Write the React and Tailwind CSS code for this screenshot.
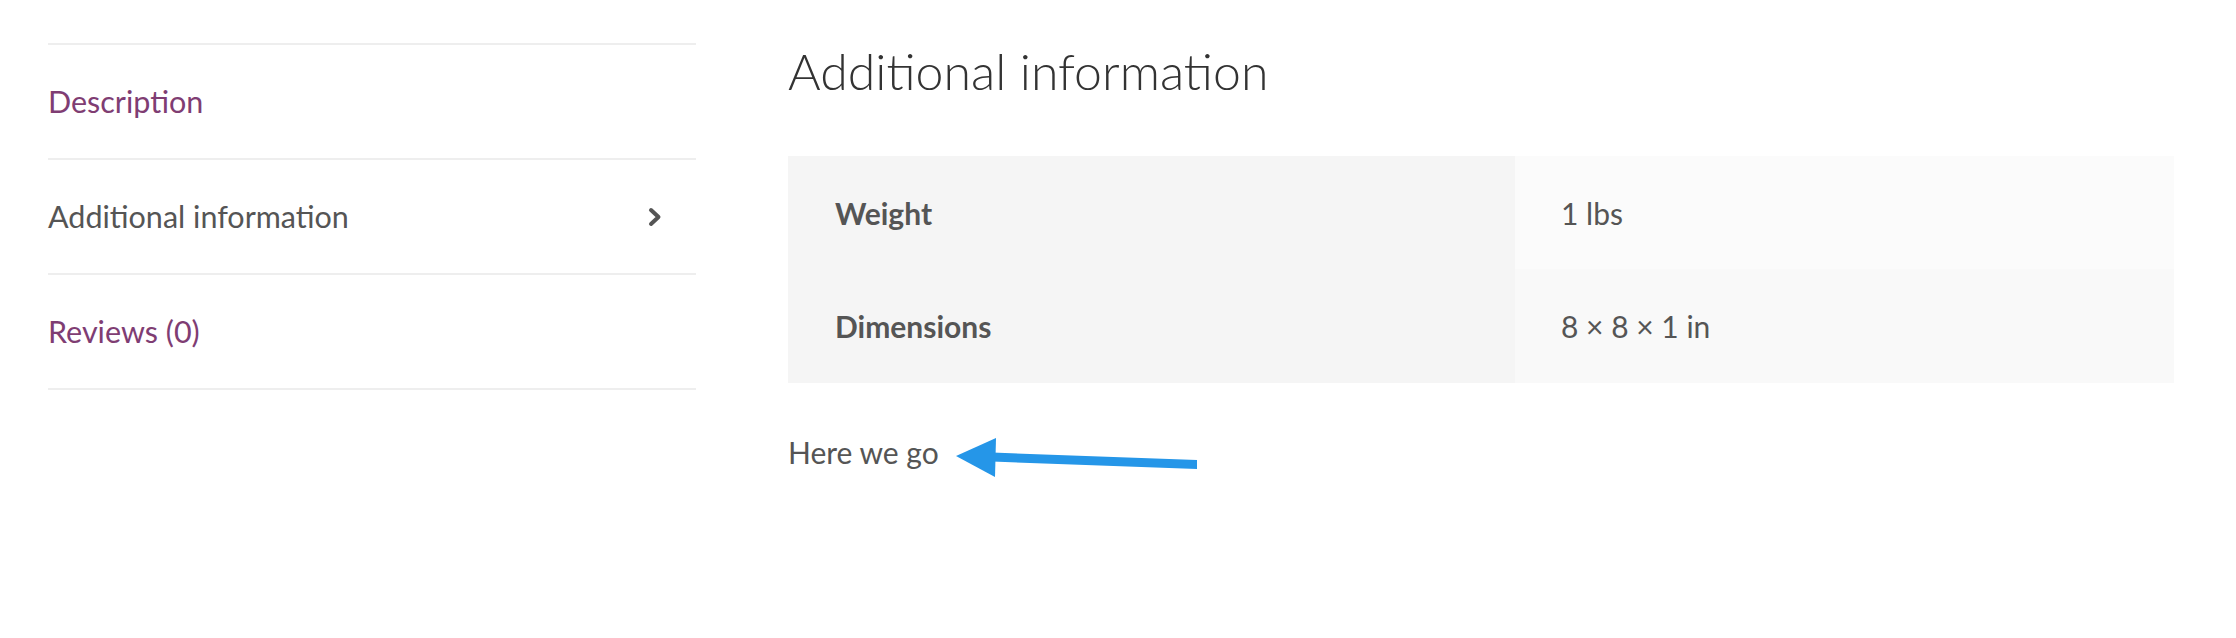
import React from 'react';

const tabs = [
    { label: 'Description', active: false },
    { label: 'Additional information', active: true },
    { label: 'Reviews (0)', active: false },
];

const attributes = [
    { name: 'Weight', value: '1 lbs', rowClass: 'h-[113px]', valueBg: 'bg-[#fbfbfb]' },
    { name: 'Dimensions', value: '8 × 8 × 1 in', rowClass: 'h-[114px]', valueBg: 'bg-[#f9f9f9]' },
];

const Chevron = () => (
    <svg width="14" height="20" viewBox="0 0 14 20" fill="none">
        <polyline
            points="3,3 10.5,10 3,17"
            stroke="#555"
            strokeWidth="4"
            strokeLinecap="round"
            strokeLinejoin="round"
        />
    </svg>
);

const Arrow = () => (
    <svg width="246" height="40" viewBox="0 0 246 40" className="mt-[4px] ml-[20px] shrink-0">
        <polygon points="2,18 42,0 41,39" fill="#2596e8" />
        <polygon points="38,14.5 243,22 243,31 38,23.5" fill="#2596e8" />
    </svg>
);

const App = () => {

    return (

        <div className="w-[2236px] h-[638px] bg-white font-['Lato','Liberation_Sans',sans-serif] text-[30px] leading-[1.2] text-[#555]">

            <div className="flex items-start pl-[48px] pt-[41px]">

                {/* TABS */}

                <ul className="w-[648px] shrink-0 mt-[2px] border-b-2 border-[#eeeeee] text-[30.5px]">
                    {tabs.map((tab) => (
                        <li
                            key={tab.label}
                            className="h-[115px] border-t-2 border-[#eeeeee] flex items-center justify-between pr-[34px]"
                        >
                            <span className={tab.active ? 'text-[#555]' : 'text-[#7f3d73]'}>
                                {tab.label}
                            </span>
                            {tab.active && <Chevron />}
                        </li>
                    ))}
                </ul>

                {/* PANEL */}

                <div className="ml-[92px] w-[1386px]">

                    <h2 className="text-[50px] leading-[60px] font-light text-[#333]">
                        Additional information
                    </h2>

                    <table className="w-full mt-[55px] border-collapse">
                        <tbody>
                            {attributes.map((row) => (
                                <tr key={row.name} className={row.rowClass}>
                                    <th className="w-[727px] bg-[#f5f5f5] text-left font-bold pl-[47px] align-middle">
                                        {row.name}
                                    </th>
                                    <td className={`${row.valueBg} pl-[46px] align-middle`}>
                                        {row.value}
                                    </td>
                                </tr>
                            ))}
                        </tbody>
                    </table>

                    <div className="flex items-start mt-[51px]">
                        <p className="w-[146px] whitespace-nowrap">Here we go</p>
                        <Arrow />
                    </div>

                </div>

            </div>

        </div>

    );

};

export default App;
